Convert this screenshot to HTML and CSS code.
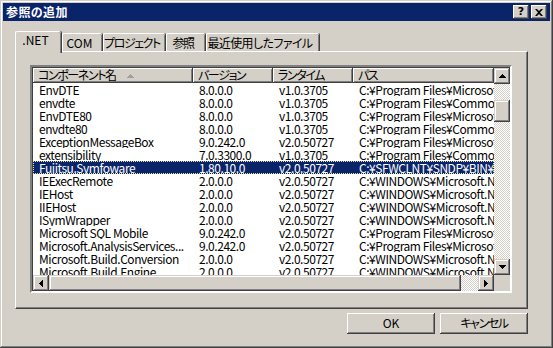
FILE: index.html
```html
<!DOCTYPE html>
<html lang="ja">
<head>
  <meta charset="UTF-8" />
  <title>参照の追加</title>
  <link rel="stylesheet" href="styles.css">
</head>
<body>
  <div class="window">
    <!-- Caption -->
    <div class="titlebar">
      <div class="title">参照の追加</div>
      <div class="caption-buttons">
        <div class="cap-btn help">?</div>
        <div class="cap-btn">
          <svg width="8" height="7" viewBox="0 0 8 7"><path d="M0 0h2l2 2 2-2h2L5 3.5 8 7H6L4 5 2 7H0l3-3.5z" fill="#000"/></svg>
        </div>
      </div>
    </div>

    <div class="content">
      <!-- Tabs -->
      <div class="tabs">
        <div class="tab tab-net active">.NET</div>
        <div class="tab tab-com">COM</div>
        <div class="tab tab-proj ja">プロジェクト</div>
        <div class="tab tab-ref ja">参照</div>
        <div class="tab tab-recent ja">最近使用したファイル</div>
      </div>

      <div class="panel">
        <div class="listview">
          <div class="lv-main">
            <div class="lv-header">
              <div class="hcell col-name"><span class="ja">コンポーネント名</span>
                <svg class="sort-arrow" width="7" height="4" viewBox="0 0 7 4"><path d="M3 0h1v1h1v1h1v1h1v1H0V3h1V2h1V1h1z" fill="#a0a0a0"/></svg>
              </div>
              <div class="hcell col-ver ja">バージョン</div>
              <div class="hcell col-rt ja">ランタイム</div>
              <div class="hcell col-path ja">パス</div>
            </div>
            <div class="lv-body">
              <div class="row"><span>EnvDTE</span><span>8.0.0.0</span><span>v1.0.3705</span><span>C:¥Program Files¥Microsoft.NET¥Primary Interop Assemblies¥envdte.dll</span></div>
              <div class="row"><span>envdte</span><span>8.0.0.0</span><span>v1.0.3705</span><span>C:¥Program Files¥Common Files¥Microsoft Shared¥MSEnv¥PublicAssemblies¥envdte.dll</span></div>
              <div class="row"><span>EnvDTE80</span><span>8.0.0.0</span><span>v1.0.3705</span><span>C:¥Program Files¥Microsoft.NET¥Primary Interop Assemblies¥EnvDTE80.dll</span></div>
              <div class="row"><span>envdte80</span><span>8.0.0.0</span><span>v1.0.3705</span><span>C:¥Program Files¥Common Files¥Microsoft Shared¥MSEnv¥PublicAssemblies¥envdte80.dll</span></div>
              <div class="row"><span>ExceptionMessageBox</span><span>9.0.242.0</span><span>v2.0.50727</span><span>C:¥Program Files¥Microsoft SQL Server¥90¥SDK¥Assemblies¥ExceptionMessageBox.dll</span></div>
              <div class="row"><span>extensibility</span><span>7.0.3300.0</span><span>v1.0.3705</span><span>C:¥Program Files¥Common Files¥Microsoft Shared¥MSEnv¥PublicAssemblies¥extensibility.dll</span></div>
              <div class="row selected"><span>Fujitsu.Symfoware</span><span>1.80.10.0</span><span>v2.0.50727</span><span>C:¥SFWCLNT¥SNDP¥BIN¥Fujitsu.Symfoware.dll</span></div>
              <div class="row"><span>IEExecRemote</span><span>2.0.0.0</span><span>v2.0.50727</span><span>C:¥WINDOWS¥Microsoft.NET¥Framework¥v2.0.50727¥IEExecRemote.dll</span></div>
              <div class="row"><span>IEHost</span><span>2.0.0.0</span><span>v2.0.50727</span><span>C:¥WINDOWS¥Microsoft.NET¥Framework¥v2.0.50727¥IEHost.dll</span></div>
              <div class="row"><span>IIEHost</span><span>2.0.0.0</span><span>v2.0.50727</span><span>C:¥WINDOWS¥Microsoft.NET¥Framework¥v2.0.50727¥IIEHost.dll</span></div>
              <div class="row"><span>ISymWrapper</span><span>2.0.0.0</span><span>v2.0.50727</span><span>C:¥WINDOWS¥Microsoft.NET¥Framework¥v2.0.50727¥ISymWrapper.dll</span></div>
              <div class="row"><span>Microsoft SQL Mobile</span><span>9.0.242.0</span><span>v2.0.50727</span><span>C:¥Program Files¥Microsoft SQL Server Compact Edition¥System.Data.SqlServerCe.dll</span></div>
              <div class="row"><span>Microsoft.AnalysisServices...</span><span>9.0.242.0</span><span>v2.0.50727</span><span>C:¥Program Files¥Microsoft SQL Server¥90¥SDK¥Assemblies¥Microsoft.AnalysisServices.dll</span></div>
              <div class="row"><span>Microsoft.Build.Conversion</span><span>2.0.0.0</span><span>v2.0.50727</span><span>C:¥WINDOWS¥Microsoft.NET¥Framework¥v2.0.50727¥Microsoft.Build.Conversion.dll</span></div>
              <div class="row"><span>Microsoft.Build.Engine</span><span>2.0.0.0</span><span>v2.0.50727</span><span>C:¥WINDOWS¥Microsoft.NET¥Framework¥v2.0.50727¥Microsoft.Build.Engine.dll</span></div>
            </div>
          </div>

          <!-- Vertical scrollbar -->
          <div class="vscroll">
            <div class="sb-btn">
              <svg width="7" height="4" viewBox="0 0 7 4"><path d="M3 0h1v1h1v1h1v1h1v1H0V3h1V2h1V1h1z" fill="#000"/></svg>
            </div>
            <div class="sb-track vtrack"><div class="sb-thumb vthumb"></div></div>
            <div class="sb-btn">
              <svg width="7" height="4" viewBox="0 0 7 4"><path d="M0 0h7v1H6v1H5v1H4v1H3V3H2V2H1V1H0z" fill="#000"/></svg>
            </div>
          </div>

          <!-- Horizontal scrollbar -->
          <div class="hscroll">
            <div class="sb-btn">
              <svg width="4" height="7" viewBox="0 0 4 7"><path d="M3 0h1v7H3V6H2V5H1V4H0V3h1V2h1V1h1z" fill="#000"/></svg>
            </div>
            <div class="sb-track htrack"><div class="sb-thumb hthumb"></div></div>
            <div class="sb-btn">
              <svg width="4" height="7" viewBox="0 0 4 7"><path d="M0 0h1v1h1v1h1v1h1v1H3v1H2v1H1v1H0z" fill="#000"/></svg>
            </div>
          </div>
          <div class="sizebox"></div>
        </div>
      </div>

      <!-- Dialog buttons -->
      <div class="buttons">
        <div class="button">OK</div>
        <div class="button ja">キャンセル</div>
      </div>
    </div>
  </div>
</body>
</html>
```

FILE: styles.css
```css
* {
  margin: 0;
  padding: 0;
  box-sizing: border-box;
}

body {
  background-color: #d4d0c8;
  font-family: "Noto Sans CJK JP", "Liberation Sans", sans-serif;
  font-size: 12px;
  font-feature-settings: "palt";
  color: #000;
}

/* Japanese labels run narrower in the original UI font */
.ja {
  letter-spacing: -1.4px;
}

/* Window frame */
.window {
  width: 553px;
  height: 348px;
  padding: 3px;
  background-color: #d4d0c8;
  box-shadow:
    inset -1px -1px #404040,
    inset 1px 1px #d4d0c8,
    inset -2px -2px #808080,
    inset 2px 2px #fff;
  display: flex;
  flex-direction: column;
}

.titlebar {
  height: 18px;
  background-color: #0a246a;
  color: #fff;
  display: flex;
  align-items: center;
  padding: 0 3px;
}

.title {
  flex: 1;
  font-weight: bold;
  font-size: 12px;
  line-height: 18px;
  letter-spacing: 0.4px;
}

.caption-buttons {
  display: flex;
  gap: 2px;
}

.cap-btn {
  width: 16px;
  height: 14px;
  background-color: #d4d0c8;
  box-shadow:
    inset -1px -1px #404040,
    inset 1px 1px #fff,
    inset -2px -2px #808080;
  display: flex;
  align-items: center;
  justify-content: center;
  color: #000;
}

.cap-btn.help {
  font-family: "DejaVu Sans", sans-serif;
  font-weight: bold;
  font-size: 11px;
  line-height: 14px;
}

.content {
  flex: 1;
  padding: 10px 22px 0 12px;
  display: flex;
  flex-direction: column;
}

/* Tabs */
.tabs {
  display: flex;
  align-items: flex-end;
}

.tab {
  height: 18px;
  line-height: 17px;
  padding-right: 6px;
  text-align: center;
  border-top: 1px solid #fff;
  border-left: 1px solid #fff;
  border-top-left-radius: 2px;
  border-top-right-radius: 2px;
  box-shadow: inset -1px 0 #808080, 1px 0 #404040;
  white-space: nowrap;
}

.tab-net { width: 46px; }
.tab-com { width: 40px; margin-left: 1px; }
.tab-proj { width: 62px; margin-left: 1px; }
.tab-ref { width: 39px; margin-left: 1px; }
.tab-recent { width: 113px; margin-left: 1px; letter-spacing: -0.6px; }

.tab.active {
  height: 22px;
  margin-bottom: -2px;
  line-height: 16px;
  background-color: #d4d0c8;
  position: relative;
  z-index: 1;
}

.panel {
  height: 258px;
  border-top: 1px solid #fff;
  border-left: 1px solid #fff;
  border-right: 1px solid #404040;
  border-bottom: 1px solid #404040;
  box-shadow: inset -1px -1px #808080;
  padding: 13px 15px 15px 14px;
  display: flex;
}

/* List view */
.listview {
  flex: 1;
  height: 228px;
  border: 2px solid;
  border-color: #808080 #fff #fff #808080;
  box-shadow: inset 1px 1px #404040, inset -1px -1px #d4d0c8;
  background-color: #fff;
  display: grid;
  grid-template-columns: 1fr 16px;
  grid-template-rows: 1fr 16px;
}

.lv-main {
  overflow: hidden;
  display: flex;
  flex-direction: column;
  margin: 1px 0 0 1px;
}

.lv-header {
  display: flex;
  height: 15px;
  flex: none;
  background-color: #d4d0c8;
}

.hcell {
  height: 15px;
  line-height: 14px;
  padding-left: 5px;
  white-space: nowrap;
  box-shadow:
    inset -1px -1px #404040,
    inset 1px 1px #fff,
    inset -2px -2px #808080;
}

.col-name { width: 160px; flex: none; }
.col-ver { width: 80px; flex: none; }
.col-rt { width: 80px; flex: none; }
.col-path { flex: 1; }

.sort-arrow {
  margin-left: 9px;
  vertical-align: 2px;
}

.lv-body {
  flex: 1;
  overflow: hidden;
}

.row {
  display: grid;
  grid-template-columns: 160px 80px 80px 300px;
  height: 13px;
  line-height: 13px;
  white-space: nowrap;
  letter-spacing: -0.45px;
}

.row span {
  padding-left: 6px;
  overflow: hidden;
}

.row.selected {
  background-color: #0a246a;
  color: #fff;
  outline: 1px dotted #e8e4a0;
  outline-offset: -1px;
}

/* Scrollbars */
.vscroll {
  display: flex;
  flex-direction: column;
  margin-top: 1px;
}

.hscroll {
  display: flex;
  margin-left: 1px;
}

.sb-btn {
  width: 16px;
  height: 16px;
  flex: none;
  background-color: #d4d0c8;
  box-shadow:
    inset -1px -1px #404040,
    inset 1px 1px #d4d0c8,
    inset -2px -2px #808080,
    inset 2px 2px #fff;
  display: flex;
  align-items: center;
  justify-content: center;
}

.sb-track {
  flex: 1;
  background: repeating-conic-gradient(#fff 0 25%, #d4d0c8 0 50%) 0 0 / 2px 2px;
}

.sb-thumb {
  background-color: #d4d0c8;
  box-shadow:
    inset -1px -1px #404040,
    inset 1px 1px #d4d0c8,
    inset -2px -2px #808080,
    inset 2px 2px #fff;
}

.vthumb {
  margin-top: 16px;
  height: 22px;
}

.htrack {
  display: flex;
}

.hthumb {
  width: 412px;
  height: 16px;
}

.sizebox {
  background-color: #d4d0c8;
}

/* Dialog buttons */
.buttons {
  display: flex;
  justify-content: flex-end;
  gap: 5px;
  margin-top: 4px;
}

.button {
  width: 88px;
  height: 21px;
  line-height: 20px;
  text-align: center;
  background-color: #d4d0c8;
  box-shadow:
    inset -1px -1px #404040,
    inset 1px 1px #fff,
    inset -2px -2px #808080;
}
```
